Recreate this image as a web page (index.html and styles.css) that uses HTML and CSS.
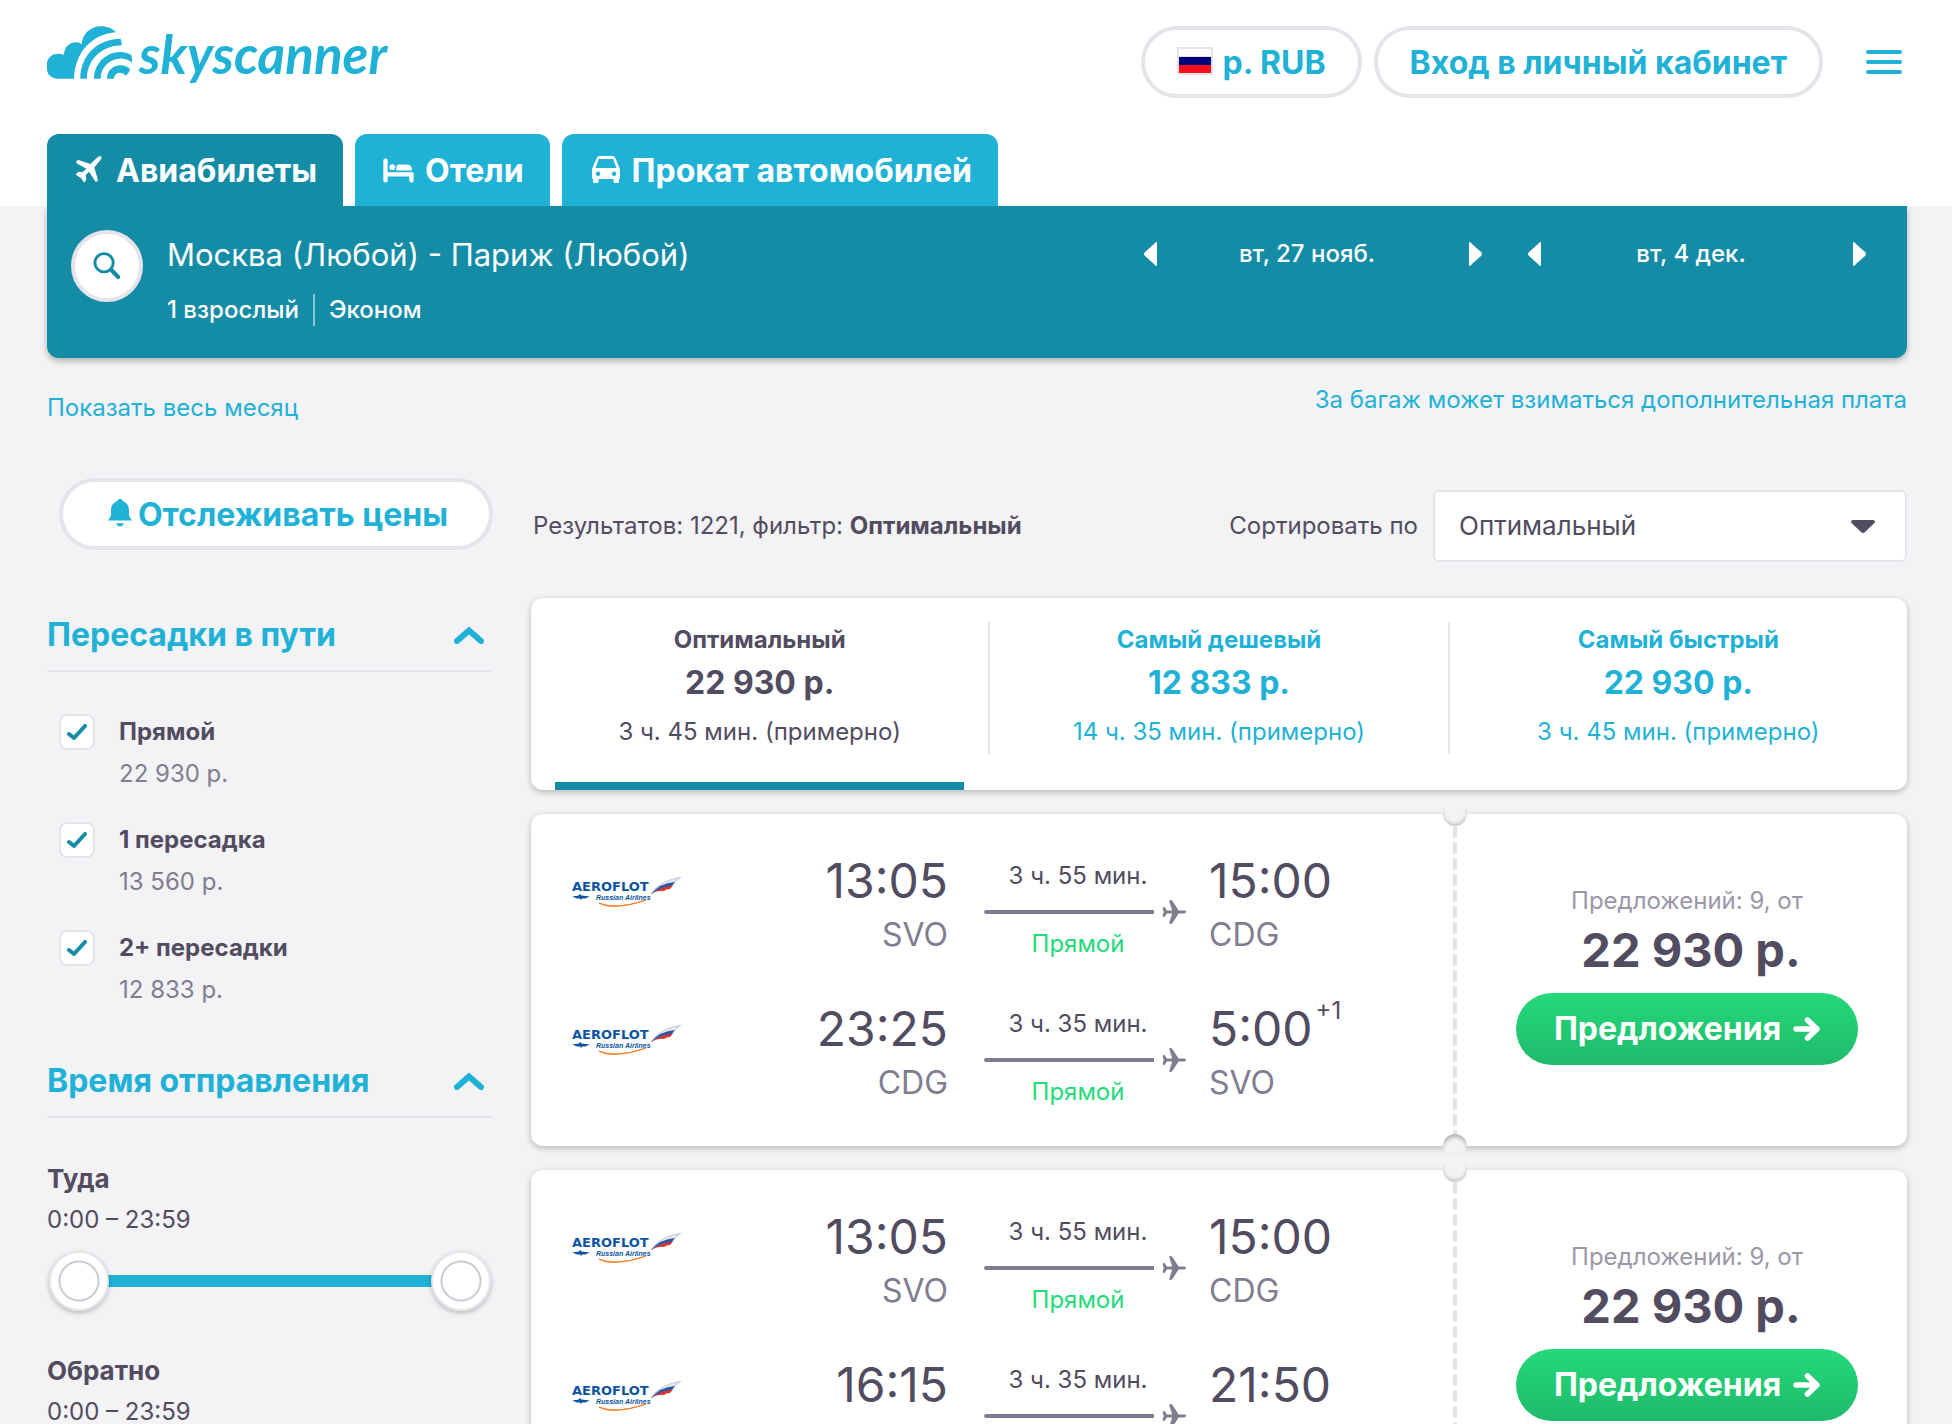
FILE: index.html
```html
<!DOCTYPE html>
<html lang="ru">
<head>
<meta charset="utf-8">
<meta name="viewport" content="width=device-width, initial-scale=1">
<title>Skyscanner – Москва – Париж</title>
<link rel="stylesheet" href="styles.css">
</head>
<body>
<svg class="sprite" aria-hidden="true">
  <symbol id="plane" viewBox="0 0 24 24"><path d="M24 12c0 .9-.9 1.4-2 1.4h-5.4L10.400 23Q9.600 24 8.200 24 6.900 23.800 7.400 22.300L10.200 13.400H4.800L3.200 16.300Q2.600 17.100 1.400 17 .3 16.800.7 15.500L1.700 12 .7 8.500Q.3 7.200 1.400 7 2.600 6.900 3.200 7.700L4.800 10.600H10.200L7.400 1.700Q6.900.2 8.200 0 9.600 0 10.400 1L16.600 10.600H22c1.100 0 2 .5 2 1.400z"/></symbol>
  <symbol id="chevron" viewBox="0 0 30 18"><path d="M3 15 15 4.500 27 15" fill="none" stroke="currentColor" stroke-width="6" stroke-linecap="round" stroke-linejoin="miter"/></symbol>
  <symbol id="check" viewBox="0 0 20 16"><path d="M2 10 7 14 18 2" fill="none" stroke="currentColor" stroke-width="4" stroke-linecap="round" stroke-linejoin="round"/></symbol>
  <symbol id="arrow" viewBox="0 0 27 24"><path d="M3 12H22M14.500 3 24 12 14.500 21" fill="none" stroke="currentColor" stroke-width="5.500" stroke-linecap="round" stroke-linejoin="round"/></symbol>
</svg>

<header class="header">
  <div class="topbar">
    <a class="logo" href="#" aria-label="skyscanner">
      <svg class="logo-mark" viewBox="141 79 258 159" aria-hidden="true"><path d="M222 237H175C155 237 141 224 141 207V188C145 172 158 162 175 162Q185 162 192 166C192 143 208 128 228 128Q238 128 245 133C247 103 272 80 304 80 322 80 338 87 348 98 275 103 224 160 222 237zM241 237C241 165 295 117 362 117L366 137C305 138 261 180 261 237zM282 237C282 190 320 158 358 157 374 157 388 161 394 167Q398 178 396 189C385 180 372 176 358 177 328 178 302 203 302 237zM321 237C321 213 339 197 361 197 373 197 383 202 390 208L387 217 378 228Q365 214 349 222 342 228 341 237z"/></svg>
      <span class="logo-text">skyscanner</span>
    </a>
    <div class="topbar-actions">
      <button class="pill currency" type="button"><svg class="flag" viewBox="0 0 36 28" aria-hidden="true"><rect width="36" height="28" fill="#e6e4eb"/><rect x="2" y="2" width="32" height="7" fill="#fff"/><rect x="2" y="10" width="32" height="8" fill="#00057b"/><rect x="2" y="18" width="32" height="8" fill="#fc0d1b"/></svg>р. RUB</button>
      <button class="pill" type="button">Вход в личный кабинет</button>
      <button class="menu" type="button" aria-label="Меню"><svg viewBox="0 0 36 24"><path d="M2 2H34M2 12H34M2 22H34" stroke="currentColor" stroke-width="4" stroke-linecap="round"/></svg></button>
    </div>
  </div>
  <nav class="tabs">
    <a class="tab tab-active" href="#"><svg class="icon-flight" viewBox="230 469 81 82"><path d="M300 471Q306 467 309 471 312 475 308 480L288 504 299 540Q300 548 292 547L272 517 262 527 264 540 257 550 249 537 231 525 240 517 252 518 264 508 234 491Q231 483 240 481L276 493z"/></svg>Авиабилеты</a>
    <a class="tab" href="#"><svg class="icon-hotel" viewBox="1148 473 93 74"><rect x="1149" y="474" width="13" height="72" rx="6"/><rect x="1151" y="515" width="88" height="13" rx="4"/><rect x="1227" y="515" width="13" height="31" rx="6"/><circle cx="1176" cy="500" r="8.500"/><path d="M1188 510V500Q1188 492 1198 492H1220Q1235 492 1235 510z"/></svg>Отели</a>
    <a class="tab" href="#"><svg class="icon-car" viewBox="0 0 28 27"><path fill-rule="evenodd" d="M5 1.500Q5.600 0 7.500 0H20.500Q22.400 0 23 1.500L28 13V21.500Q28 23 26.500 23H1.500Q0 23 0 21.500V13zM6.800 3 3.600 12H24.400L21.200 3zM6 15.500a2.300 2.300 0 1 0 .1 0zM22 15.500a2.300 2.300 0 1 0 .1 0z"/><rect x="1" y="21" width="5.500" height="6" rx="1.500"/><rect x="21.500" y="21" width="5.500" height="6" rx="1.500"/></svg>Прокат автомобилей</a>
  </nav>
</header>

<div class="page">
  <section class="search">
    <button class="search-button" type="button" aria-label="Изменить поиск"><svg viewBox="275 155 86 86"><circle cx="309" cy="188" r="28" fill="none" stroke="currentColor" stroke-width="9"/><path d="M333 212 352 232" stroke="currentColor" stroke-width="13" stroke-linecap="round"/></svg></button>
    <div class="search-summary">
      <h1>Москва (Любой) - Париж (Любой)</h1>
      <p><span>1 взрослый</span><span class="search-class">Эконом</span></p>
    </div>
    <div class="date">
      <button type="button" aria-label="Предыдущий день"><svg viewBox="0 0 14 24"><path d="M13 0V24Q11 24 10 22L1 14Q-1 12 1 10L10 2Q11 0 13 0z"/></svg></button>
      <span>вт, 27 нояб.</span>
      <button type="button" aria-label="Следующий день"><svg viewBox="0 0 14 24"><path d="M1 0V24Q3 24 4 22L13 14Q15 12 13 10L4 2Q3 0 1 0z"/></svg></button>
    </div>
    <div class="date">
      <button type="button" aria-label="Предыдущий день"><svg viewBox="0 0 14 24"><path d="M13 0V24Q11 24 10 22L1 14Q-1 12 1 10L10 2Q11 0 13 0z"/></svg></button>
      <span>вт, 4 дек.</span>
      <button type="button" aria-label="Следующий день"><svg viewBox="0 0 14 24"><path d="M1 0V24Q3 24 4 22L13 14Q15 12 13 10L4 2Q3 0 1 0z"/></svg></button>
    </div>
  </section>

  <div class="links">
    <a href="#" class="link-month">Показать весь месяц</a>
    <a href="#">За багаж может взиматься дополнительная плата</a>
  </div>

  <div class="columns">
    <aside class="sidebar">
      <button class="pill track" type="button"><svg class="icon-bell" viewBox="0 0 24 28"><path d="M12 0Q14.500 0 15.200 2.400C19 3.600 21 7 21 11V15Q21 18.500 24 21.500H0Q3 18.500 3 15V11C3 7 5 3.600 8.800 2.400Q9.500 0 12 0zM8 24.300H16Q14.500 27.600 12 27.600T8 24.300z"/></svg>Отслеживать цены</button>

      <section class="filter filter-first">
        <h2><button type="button">Пересадки в пути<svg class="icon-chevron"><use href="#chevron"/></svg></button></h2>
        <div class="stops">
          <label class="stop"><span class="box"><input type="checkbox" checked><svg><use href="#check"/></svg></span><span><b>Прямой</b><small>22 930 р.</small></span></label>
          <label class="stop"><span class="box"><input type="checkbox" checked><svg><use href="#check"/></svg></span><span><b>1 пересадка</b><small>13 560 р.</small></span></label>
          <label class="stop"><span class="box"><input type="checkbox" checked><svg><use href="#check"/></svg></span><span><b>2+ пересадки</b><small>12 833 р.</small></span></label>
        </div>
      </section>

      <section class="filter">
        <h2><button type="button">Время отправления<svg class="icon-chevron"><use href="#chevron"/></svg></button></h2>
        <div class="times">
          <div>
            <h3>Туда</h3>
            <p>0:00 – 23:59</p>
            <div class="slider"><input type="range" min="0" max="1439" value="0" aria-label="Туда: не раньше"><input type="range" min="0" max="1439" value="1439" aria-label="Туда: не позже"></div>
          </div>
          <div>
            <h3>Обратно</h3>
            <p>0:00 – 23:59</p>
            <div class="slider"><input type="range" min="0" max="1439" value="0" aria-label="Обратно: не раньше"><input type="range" min="0" max="1439" value="1439" aria-label="Обратно: не позже"></div>
          </div>
        </div>
      </section>
    </aside>

    <main class="results">
      <div class="toolbar">
        <p>Результатов: 1221, фильтр: <b>Оптимальный</b></p>
        <label for="sort">Сортировать по</label>
        <div class="select">
          <select id="sort"><option>Оптимальный</option><option>Самый дешевый</option><option>Самый быстрый</option></select>
          <svg viewBox="0 0 24 13"><path d="M2 0H22Q25 .5 23.400 3L14 12Q12 13.800 10 12L.6 3Q-1 .5 2 0z"/></svg>
        </div>
      </div>

      <div class="sorts card">
        <button class="sort sort-active" type="button"><b>Оптимальный</b><strong>22 930 р.</strong><span>3 ч. 45 мин. (примерно)</span></button>
        <span class="sort-divider"></span>
        <button class="sort" type="button"><b>Самый дешевый</b><strong>12 833 р.</strong><span>14 ч. 35 мин. (примерно)</span></button>
        <span class="sort-divider"></span>
        <button class="sort" type="button"><b>Самый быстрый</b><strong>22 930 р.</strong><span>3 ч. 45 мин. (примерно)</span></button>
      </div>

      <article class="ticket card">
        <div class="legs">
          <div class="leg">
            <svg class="airline" viewBox="0 0 110 32"><text x="0" y="14" class="aero-name">AEROFLOT</text><text x="24" y="23" class="aero-sub">Russian Airlines</text><path d="M0 19.500 6 18.800 8.500 17 9.300 18.600 18 19.500 13 21.600H10L9 23 8 21.600H5z" fill="#0b559f"/><path d="M27 26Q40 34 74 23 58 29 44 29 34 29 27 26z" fill="#f5812a" stroke="#f5812a"/><path d="M79 17Q87 4 109 0 104 3 102 6 92 6 79 17z" fill="#e4e7ee" stroke="#9aa3b5" stroke-width=".5"/><path d="M79 17Q88 6 103 5L100 9Q90 10 79 17z" fill="#2459a8"/><path d="M79 17Q90 9 101 8.500L98 12Q94 12 92 14 86 13 79 17z" fill="#d8322f"/></svg>
            <div class="stop-point depart"><time>13:05</time><span>SVO</span></div>
            <div class="route"><span>3 ч. 55 мин.</span><div class="path"><i></i><svg><use href="#plane"/></svg></div><span class="direct">Прямой</span></div>
            <div class="stop-point"><time>15:00</time><span>CDG</span></div>
          </div>
          <div class="leg">
            <svg class="airline" viewBox="0 0 110 32"><text x="0" y="14" class="aero-name">AEROFLOT</text><text x="24" y="23" class="aero-sub">Russian Airlines</text><path d="M0 19.500 6 18.800 8.500 17 9.300 18.600 18 19.500 13 21.600H10L9 23 8 21.600H5z" fill="#0b559f"/><path d="M27 26Q40 34 74 23 58 29 44 29 34 29 27 26z" fill="#f5812a" stroke="#f5812a"/><path d="M79 17Q87 4 109 0 104 3 102 6 92 6 79 17z" fill="#e4e7ee" stroke="#9aa3b5" stroke-width=".5"/><path d="M79 17Q88 6 103 5L100 9Q90 10 79 17z" fill="#2459a8"/><path d="M79 17Q90 9 101 8.500L98 12Q94 12 92 14 86 13 79 17z" fill="#d8322f"/></svg>
            <div class="stop-point depart"><time>23:25</time><span>CDG</span></div>
            <div class="route"><span>3 ч. 35 мин.</span><div class="path"><i></i><svg><use href="#plane"/></svg></div><span class="direct">Прямой</span></div>
            <div class="stop-point"><time>5:00<sup>+1</sup></time><span>SVO</span></div>
          </div>
        </div>
        <div class="offer">
          <p>Предложений: 9, от</p>
          <strong>22 930 р.</strong>
          <button type="button">Предложения<svg><use href="#arrow"/></svg></button>
        </div>
      </article>

      <article class="ticket card">
        <div class="legs">
          <div class="leg">
            <svg class="airline" viewBox="0 0 110 32"><text x="0" y="14" class="aero-name">AEROFLOT</text><text x="24" y="23" class="aero-sub">Russian Airlines</text><path d="M0 19.500 6 18.800 8.500 17 9.300 18.600 18 19.500 13 21.600H10L9 23 8 21.600H5z" fill="#0b559f"/><path d="M27 26Q40 34 74 23 58 29 44 29 34 29 27 26z" fill="#f5812a" stroke="#f5812a"/><path d="M79 17Q87 4 109 0 104 3 102 6 92 6 79 17z" fill="#e4e7ee" stroke="#9aa3b5" stroke-width=".5"/><path d="M79 17Q88 6 103 5L100 9Q90 10 79 17z" fill="#2459a8"/><path d="M79 17Q90 9 101 8.500L98 12Q94 12 92 14 86 13 79 17z" fill="#d8322f"/></svg>
            <div class="stop-point depart"><time>13:05</time><span>SVO</span></div>
            <div class="route"><span>3 ч. 55 мин.</span><div class="path"><i></i><svg><use href="#plane"/></svg></div><span class="direct">Прямой</span></div>
            <div class="stop-point"><time>15:00</time><span>CDG</span></div>
          </div>
          <div class="leg">
            <svg class="airline" viewBox="0 0 110 32"><text x="0" y="14" class="aero-name">AEROFLOT</text><text x="24" y="23" class="aero-sub">Russian Airlines</text><path d="M0 19.500 6 18.800 8.500 17 9.300 18.600 18 19.500 13 21.600H10L9 23 8 21.600H5z" fill="#0b559f"/><path d="M27 26Q40 34 74 23 58 29 44 29 34 29 27 26z" fill="#f5812a" stroke="#f5812a"/><path d="M79 17Q87 4 109 0 104 3 102 6 92 6 79 17z" fill="#e4e7ee" stroke="#9aa3b5" stroke-width=".5"/><path d="M79 17Q88 6 103 5L100 9Q90 10 79 17z" fill="#2459a8"/><path d="M79 17Q90 9 101 8.500L98 12Q94 12 92 14 86 13 79 17z" fill="#d8322f"/></svg>
            <div class="stop-point depart"><time>16:15</time><span>CDG</span></div>
            <div class="route"><span>3 ч. 35 мин.</span><div class="path"><i></i><svg><use href="#plane"/></svg></div><span class="direct">Прямой</span></div>
            <div class="stop-point"><time>21:50</time><span>SVO</span></div>
          </div>
        </div>
        <div class="offer">
          <p>Предложений: 9, от</p>
          <strong>22 930 р.</strong>
          <button type="button">Предложения<svg><use href="#arrow"/></svg></button>
        </div>
      </article>
    </main>
  </div>
</div>
</body>
</html>
```
FILE: styles.css
```css
:root {
  --blue: #1fb1d6;
  --teal: #158ca6;
  --ink: #524c61;
  --grey: #817d91;
  --line: #e6e4eb;
  --page: #f3f2f5;
  --green: #24d97a;
}

* { box-sizing: border-box; }

body {
  margin: 0;
  background: var(--page);
  color: var(--ink);
  font: 24px/32px Inter, "Noto Sans", sans-serif;
}

h1, h2, h3, p { margin: 0; font-weight: 400; }
a { color: var(--blue); text-decoration: none; }
button { padding: 0; border: 0; background: none; font: inherit; color: inherit; cursor: pointer; }
svg { display: block; flex: none; fill: currentColor; }
.sprite { position: absolute; width: 0; height: 0; }

/* Header */
.header { padding: 26px 45px 0 47px; background: #fff; }
.topbar { display: flex; justify-content: space-between; align-items: flex-start; }
.logo { display: flex; gap: 6px; }
.logo-mark { width: 86px; height: 53px; }
.logo-text { font: italic 700 53px/56px Lato, "Open Sans", sans-serif; }
.topbar-actions { display: flex; align-items: center; gap: 12px; color: var(--blue); }
.pill {
  display: flex; align-items: center; justify-content: center; gap: 6px;
  height: 72px; padding: 2px 32px 0;
  border: 4px solid var(--line); border-radius: 36px;
  background: #fff; color: var(--blue);
  font-size: 32px; font-weight: 700; white-space: nowrap;
}
.currency { gap: 10px; }
.flag { width: 36px; height: 28px; margin-bottom: 4px; }
.menu { margin: 0 5px 0 31px; }
.menu svg { width: 36px; height: 24px; }

.tabs { display: flex; gap: 12px; margin-top: 36px; }
.tab {
  display: flex; align-items: center; height: 72px; padding: 2px 26px 0 28px;
  border-radius: 12px 12px 0 0; background: var(--blue);
  color: #fff; font-size: 32px; font-weight: 700; white-space: nowrap;
}
.tab-active { background: var(--teal); }
.icon-flight { width: 27px; height: 27px; margin: 0 14px 4px 0; }
.icon-hotel { width: 31px; height: 25px; margin: 0 11px 2px 0; }
.icon-car { width: 28px; height: 27px; margin: 0 12px 4px 2px; }

/* Search summary */
.page { padding: 0 45px 40px 47px; }
.search {
  display: flex; align-items: flex-start; gap: 24px;
  padding: 24px 30px 32px 24px;
  border-radius: 0 0 12px 12px; background: var(--teal); color: #fff;
  box-shadow: 0 3px 6px rgba(0, 0, 0, .28);
}
.search-button {
  display: grid; place-items: center; width: 72px; height: 72px;
  border: 4px solid var(--line); border-radius: 50%;
  background: #fff; color: var(--teal);
}
.search-button svg { width: 28px; height: 28px; }
.search-summary { flex: 1; }
.search-summary h1 { font-size: 31px; line-height: 50px; }
.search-summary p { display: flex; margin-top: 14px; font-weight: 500; }
.search-class { margin-left: 14px; padding-left: 14px; border-left: 2px solid rgba(255, 255, 255, .5); }
.date { display: flex; align-items: center; justify-content: space-between; width: 360px; height: 48px; font-weight: 500; }
.date span { padding-right: 12px; }
.date button { display: grid; place-items: center; width: 36px; height: 48px; }
.date svg { width: 14px; height: 24px; }

.links { display: flex; justify-content: space-between; align-items: flex-start; margin-top: 26px; }
.link-month { margin-top: 8px; }

.columns { display: grid; grid-template-columns: 446px minmax(0, 1fr); gap: 38px; margin-top: 54px; }

/* Filters */
.track { width: calc(100% - 12px); margin-left: 12px; padding-right: 28px; }
.icon-bell { width: 24px; height: 28px; margin-bottom: 4px; }
.filter { margin-top: 50px; }
.filter-first { margin-top: 65px; }
.filter h2 { border-bottom: 2px solid var(--line); color: var(--blue); }
.filter h2 button {
  display: flex; align-items: center; justify-content: space-between;
  width: 100%; padding: 0 9px 15px 0;
  font-size: 32px; line-height: 40px; font-weight: 700;
}
.icon-chevron { width: 30px; height: 18px; }
.stops { display: grid; gap: 24px; padding: 39px 0 0 12px; }
.stop { display: flex; gap: 24px; line-height: 42px; }
.stop b, .stop small { display: block; font-size: 24px; }
.stop small { color: var(--grey); }
.box { display: grid; place-items: center; height: 42px; }
.box > * { grid-area: 1 / 1; }
.box input {
  appearance: none; width: 36px; height: 36px; margin: 0;
  border: 2px solid var(--line); border-radius: 8px; background: #fff;
}
.box svg { display: none; width: 20px; height: 16px; color: var(--teal); pointer-events: none; }
.box input:checked + svg { display: block; }

.times { display: grid; gap: 40px; padding-top: 41px; line-height: 40px; }
.times h3 { font-size: 26px; font-weight: 700; }
.times p { line-height: 42px; }
.slider {
  display: grid; height: 60px; margin-top: 10px; padding: 0 2px;
  background: linear-gradient(var(--blue), var(--blue)) center / calc(100% - 60px) 12px no-repeat;
}
.slider input {
  grid-area: 1 / 1; appearance: none; width: 100%; height: 60px; margin: 0;
  background: none; pointer-events: none;
}
.slider input::-webkit-slider-thumb {
  appearance: none; width: 60px; height: 60px;
  border: 2px solid var(--line); border-radius: 50%;
  background: radial-gradient(circle, #fff 18px, #cdcad6 19px, #cdcad6 20px, #fff 21px);
  box-shadow: 0 2px 5px rgba(0, 0, 0, .25);
  pointer-events: auto;
}

/* Results */
.toolbar { display: flex; align-items: center; height: 72px; margin-top: 12px; }
.toolbar p { flex: 1; padding-left: 2px; }
.toolbar label { margin-right: 15px; }
.select { display: grid; align-items: center; width: 474px; }
.select > * { grid-area: 1 / 1; }
.select select {
  appearance: none; width: 100%; height: 72px; padding: 0 24px;
  border: 2px solid var(--line); border-radius: 6px; background: #fff;
  font: inherit; font-size: 26px; color: inherit;
}
.select svg { justify-self: end; width: 24px; height: 13px; margin-right: 32px; pointer-events: none; }

.card { border-radius: 12px; background: #fff; box-shadow: 0 2px 6px rgba(0, 0, 0, .26); }
.sorts { display: flex; align-items: flex-start; margin-top: 36px; }
.sort {
  display: grid; flex: 1; margin: 0 24px; padding: 25px 0 27px;
  grid-template-rows: 34px 52px 46px; align-items: center; text-align: center;
  border-bottom: 8px solid transparent; color: var(--blue);
}
.sort strong { font-size: 32px; }
.sort-active { border-color: var(--teal); color: var(--ink); }
.sort-divider { width: 2px; height: 132px; margin-top: 24px; background: var(--line); }

.ticket { position: relative; display: grid; grid-template-columns: minmax(0, 1fr) 454px; margin-top: 24px; }
.legs { display: grid; gap: 36px; padding: 38px 0 34px 41px; }
.leg { display: grid; grid-template-columns: 110px 1fr 202px 267px; }
.airline { width: 110px; height: 32px; margin-top: 25px; }
.aero-name { font: 700 13px "DejaVu Sans", sans-serif; fill: #0b559f; }
.aero-sub { font: italic 700 7px "Liberation Sans", sans-serif; fill: #0b559f; }
.depart { padding-right: 36px; text-align: right; }
.route { text-align: center; }
.route > span { display: block; padding-right: 14px; line-height: 48px; }
.route > .direct { color: var(--green); line-height: 40px; }
.path { display: flex; align-items: center; gap: 8px; color: var(--grey); }
.path i { flex: 1; height: 4px; border-radius: 2px 0 0 2px; background: currentColor; }
.path svg { width: 24px; height: 24px; }
.stop-point:last-child { padding-left: 23px; }
.stop-point time { display: block; font-size: 48px; line-height: 58px; }
.stop-point span { display: block; font-size: 32px; line-height: 50px; color: var(--grey); }
.stop-point sup { margin-left: 3px; font-size: 24px; line-height: 0; vertical-align: 27px; }

.offer {
  display: flex; flex-direction: column; align-items: center;
  padding: 69px 0 0 14px;
  background: repeating-linear-gradient(var(--line) 0 12px, transparent 12px 16px) 0 12px / 4px calc(100% - 24px) no-repeat;
}
.offer p { line-height: 36px; color: #9b97a8; }
.offer strong { padding-left: 8px; font-size: 47px; line-height: 62px; }
.offer button {
  display: flex; align-items: center; gap: 12px;
  height: 72px; margin-top: 12px; padding: 0 38px; border-radius: 36px;
  background: linear-gradient(#24d97a, #1fba6b);
  color: #fff; font-size: 32px; font-weight: 700;
}
.offer button svg { width: 27px; height: 24px; }

/* Punched notches on the tear line */
.ticket::before, .ticket::after {
  content: ""; position: absolute; right: 440px; width: 24px; height: 18px; background: var(--page);
}
.ticket::before { top: -6px; border-radius: 0 0 12px 12px; box-shadow: inset 0 -3px 4px -1px rgba(0, 0, 0, .2); }
.ticket::after { bottom: -6px; border-radius: 12px 12px 0 0; box-shadow: inset 0 4px 4px -1px rgba(0, 0, 0, .28); }
```
